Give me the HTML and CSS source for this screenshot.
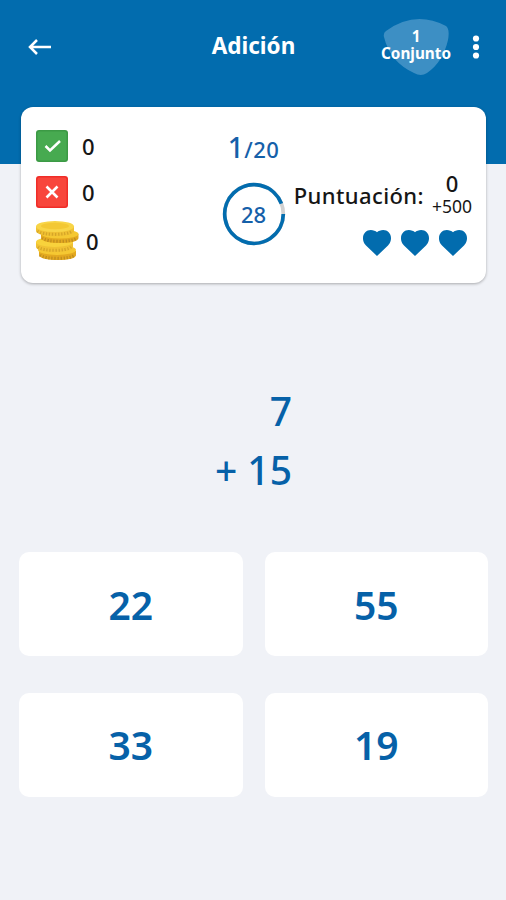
FILE: index.html
```html
<!DOCTYPE html>
<html lang="es">
<head>
  <meta charset="UTF-8" />
  <meta name="viewport" content="width=device-width, initial-scale=1.0"/>
  <title>Adición</title>
  <link rel="stylesheet" href="styles.css">
</head>
<body>

<header>
  <button class="back" aria-label="Volver">
    <svg width="24" height="18" viewBox="0 0 24 18"><path d="M9 2L2 9l7 7M2.500 9H23" fill="none" stroke="#fff" stroke-width="2.500"/></svg>
  </button>
  <h1>Adición</h1>
  <div class="level">
    <svg class="shield" width="66" height="60" viewBox="0 0 66 60"><path d="M3 14Q32-7 63 9Q67 12 65 23Q60 45 44 56Q38 60 31 56Q7 45 1 20Q0 16 3 14Z" fill="#3d8fc4"/></svg>
    <span>1</span>
    <span>Conjunto</span>
  </div>
  <button class="more" aria-label="Menú">
    <svg width="8" height="26" viewBox="0 0 8 26"><circle cx="4" cy="4.500" r="3.100" fill="#fff"/><circle cx="4" cy="13" r="3.100" fill="#fff"/><circle cx="4" cy="21.500" r="3.100" fill="#fff"/></svg>
  </button>
</header>

<section class="card">
  <div class="counts">
    <div class="count">
      <svg width="32" height="32" viewBox="0 0 32 32"><rect width="32" height="32" rx="3" fill="#3c9a45"/><rect x="1.500" y="1.500" width="29" height="29" rx="2" fill="#47aa50"/><path d="M9.500 16l4.500 4.500L24 11" fill="none" stroke="#fff" stroke-width="2.500"/></svg>
      <span>0</span>
    </div>
    <div class="count">
      <svg width="32" height="32" viewBox="0 0 32 32"><rect width="32" height="32" rx="3" fill="#f02d28"/><rect x="1.500" y="1.500" width="29" height="29" rx="2" fill="#f8463c"/><path d="M10.500 10.500l11 11M21.500 10.500l-11 11" fill="none" stroke="#fff" stroke-width="2.600"/></svg>
      <span>0</span>
    </div>
    <div class="count coins">
      <svg width="43" height="40" viewBox="0 0 43 40">
        <path d="M3 30v4c0 3 8 5 19 5s18-2 18-5v-4z" fill="#e3a920"/>
        <path d="M4 34c5 4.500 30 4.500 35 0" fill="none" stroke="#c08d1f" stroke-width="3" stroke-dasharray="1.300 1.700"/>
        <ellipse cx="21" cy="29" rx="19" ry="5" fill="#f5c832"/>
        <path d="M0 21v5c0 3 8 5 18.500 5s18.500-2 18.500-5v-5z" fill="#f0c133"/>
        <path d="M2 26c5 4.500 28 4.500 33 0" fill="none" stroke="#d5a528" stroke-width="3" stroke-dasharray="1.300 1.700"/>
        <ellipse cx="18.500" cy="21" rx="18.500" ry="5" fill="#f8d23c"/>
        <path d="M5 13v4c0 3 8 5 19 5s18.500-2 18.500-5v-4z" fill="#e3a920"/>
        <path d="M6 17c5 4.500 30 4.500 35 0" fill="none" stroke="#c08d1f" stroke-width="3" stroke-dasharray="1.300 1.700"/>
        <ellipse cx="24" cy="13" rx="18.500" ry="4.500" fill="#f5c832"/>
        <path d="M0 5v5c0 3 8 5 19 5s19-2 19-5V5z" fill="#f0c133"/>
        <path d="M1.500 10c5 4.500 30 4.500 35 0" fill="none" stroke="#d5a528" stroke-width="3" stroke-dasharray="1.300 1.700"/>
        <ellipse cx="19" cy="5.500" rx="19" ry="5.500" fill="#f8d548"/>
        <ellipse cx="19" cy="5" rx="14" ry="3.300" fill="#f3c834"/>
      </svg>
      <span>0</span>
    </div>
  </div>

  <div class="progress">
    <div class="question"><span class="current">1</span>/20</div>
    <div class="timer">
      <svg width="64" height="64" viewBox="0 0 64 64"><circle cx="32" cy="32" r="29.300" fill="none" stroke="#d0d0d0" stroke-width="3.700"/><path d="M61.300 32A29.300 29.300 0 1 1 59.400 21.600" fill="none" stroke="#026cae" stroke-width="3.700"/></svg>
      <span>28</span>
    </div>
  </div>

  <div class="score">
    <div class="score-row">
      <span class="label">Puntuación:</span>
      <div class="points">
        <strong>0</strong>
        <span>+500</span>
      </div>
    </div>
    <div class="lives">
      <svg width="28" height="26" viewBox="0 0 28 26"><path d="M14 26L3 15.500C0 12.500 0 9 0 8C0 3.500 3.500 0 7.800 0C10.300 0 12.600 1 14 2.200C15.400 1 17.700 0 20.200 0C24.500 0 28 3.500 28 8C28 9 28 12.500 25 15.500Z" fill="#026cae"/></svg>
      <svg width="28" height="26" viewBox="0 0 28 26"><path d="M14 26L3 15.500C0 12.500 0 9 0 8C0 3.500 3.500 0 7.800 0C10.300 0 12.600 1 14 2.200C15.400 1 17.700 0 20.200 0C24.500 0 28 3.500 28 8C28 9 28 12.500 25 15.500Z" fill="#026cae"/></svg>
      <svg width="28" height="26" viewBox="0 0 28 26"><path d="M14 26L3 15.500C0 12.500 0 9 0 8C0 3.500 3.500 0 7.800 0C10.300 0 12.600 1 14 2.200C15.400 1 17.700 0 20.200 0C24.500 0 28 3.500 28 8C28 9 28 12.500 25 15.500Z" fill="#026cae"/></svg>
    </div>
  </div>
</section>

<main>
  <div class="problem">
    <div>7</div>
    <div>+ 15</div>
  </div>
  <div class="answers">
    <button>22</button>
    <button>55</button>
    <button>33</button>
    <button>19</button>
  </div>
</main>

</body>
</html>
```
FILE: styles.css
```css
* {
  box-sizing: border-box;
}

body {
  font-family: 'Noto Sans', 'Open Sans', sans-serif;
  background: #f0f2f7;
  color: #161616;
  margin: 0;
  height: 900px;
  overflow: hidden;
}

button {
  background: none;
  border: none;
  padding: 0;
  font-family: inherit;
  cursor: pointer;
}

svg {
  display: block;
  flex: none;
}

header {
  background: #026cae;
  color: white;
  height: 164px;
  padding: 16px 26px 0 28px;
  display: grid;
  grid-template-columns: 94px 1fr 70px 8px;
  column-gap: 21px;
  align-items: start;
}

.back {
  margin-top: 22px;
}

h1 {
  margin: 14px 0 0 4px;
  text-align: center;
  font-size: 22.5px;
  line-height: 32px;
  font-weight: 700;
}

.level {
  position: relative;
  display: flex;
  flex-direction: column;
  align-items: center;
  padding-top: 12px;
  font-size: 15.3px;
  line-height: 17px;
  font-weight: 700;
}

.level span {
  position: relative;
}

.shield {
  position: absolute;
  left: 2px;
  top: 1px;
}

.more {
  margin-top: 18px;
}

.card {
  background: white;
  height: 176px;
  margin: -57px 20px 0 21px;
  padding: 0 14px 0 15px;
  border-radius: 12px;
  box-shadow: 0 1px 3px rgba(0,0,0,0.3);
  display: grid;
  grid-template-columns: 150px 135px 1fr;
}

.counts {
  padding-top: 23px;
  display: flex;
  flex-direction: column;
  gap: 14px;
}

.count {
  display: flex;
  align-items: center;
  gap: 14px;
  height: 32px;
  font-size: 22px;
  font-weight: 550;
}

.coins {
  height: 40px;
  gap: 7px;
  margin-top: -1px;
}

.progress {
  display: flex;
  flex-direction: column;
  align-items: center;
  padding-top: 24px;
}

.question {
  color: #1560a9;
  font-size: 22px;
  line-height: 32px;
  font-weight: 550;
  letter-spacing: 0.4px;
}

.current {
  font-size: 28px;
}

.timer {
  display: grid;
  place-items: center;
  margin-top: 17px;
}

.timer > * {
  grid-area: 1 / 1;
}

.timer span {
  color: #1560a9;
  font-size: 22px;
  font-weight: 550;
}

.score {
  padding-top: 65px;
  display: flex;
  flex-direction: column;
}

.score-row {
  display: flex;
  justify-content: flex-end;
  gap: 8px;
  margin-left: -40px;
}

.label {
  font-size: 22px;
  line-height: 30px;
  margin-top: 8px;
  font-weight: 550;
  letter-spacing: 0.4px;
}

.points {
  display: flex;
  flex-direction: column;
  align-items: center;
  line-height: 23px;
}

.points strong {
  font-size: 22px;
  font-weight: 550;
}

.points span {
  font-size: 17.5px;
}

.lives {
  display: flex;
  justify-content: flex-end;
  gap: 10px;
  margin: 12px 5px 0 0;
}

.problem {
  width: 78px;
  margin: 98px 0 0 214px;
  color: #0661a8;
  font-size: 39px;
  line-height: 59px;
  font-weight: 550;
  text-align: right;
  white-space: nowrap;
}

.answers {
  display: grid;
  grid-template-columns: 1fr 1fr;
  grid-auto-rows: 104px;
  gap: 36.5px 22px;
  margin: 53px 18px 0 19px;
}

.answers button {
  background: white;
  border-radius: 10px;
  color: #0661a8;
  font-size: 39px;
  font-weight: 580;
}
```
